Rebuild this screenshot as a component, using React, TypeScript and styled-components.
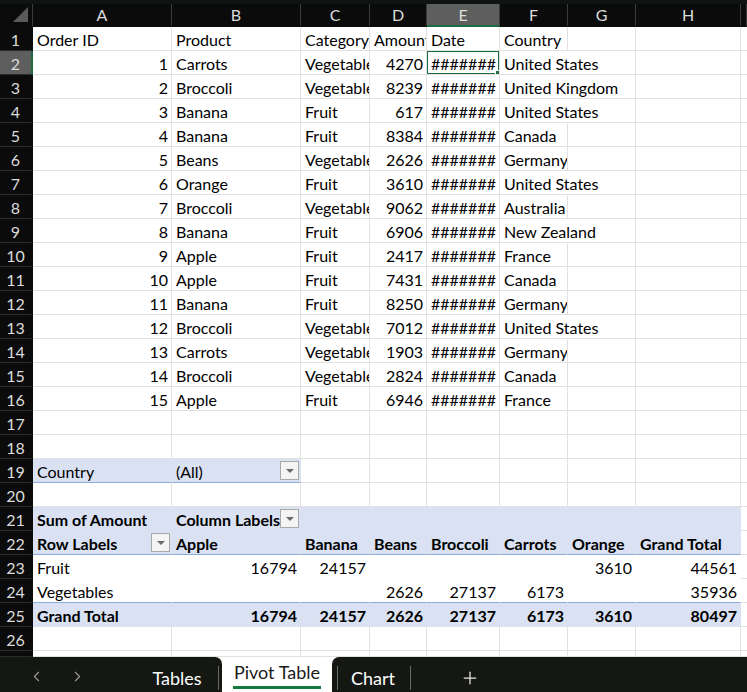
import styled, { createGlobalStyle, css } from "styled-components";
import { ChevronLeft, ChevronRight, Plus } from "lucide-react";

const GlobalStyle = createGlobalStyle`
  html, body {
    margin: 0;
    padding: 0;
    background: #ffffff;
  }
  body {
    font-family: Lato, "Liberation Sans", sans-serif;
    overflow: hidden;
  }
`;

const COLS = "33px 139px 129px 69px 57px 73px 68px 68px 105px 6px";
const BAND = "#d9e1f2";
const BLUE_LINE = "#8ea9db";
const GRID = "#e1e1e1";
const GREEN = "#1d6b40";

const Page = styled.div`
  width: 747px;
  height: 692px;
  display: flex;
  flex-direction: column;
  overflow: hidden;
  background: #ffffff;
`;

const TopStrip = styled.div`
  height: 4px;
  flex-shrink: 0;
  background: #0f1410;
`;

const Row = styled.div<{ $h?: number }>`
  display: grid;
  grid-template-columns: ${COLS};
  grid-template-rows: ${(p) => p.$h ?? 24}px;
  height: ${(p) => p.$h ?? 24}px;
  flex-shrink: 0;
  overflow: hidden;
`;

const ColHead = styled.div<{ $active?: boolean }>`
  position: relative;
  box-sizing: border-box;
  background: ${(p) => (p.$active ? "#5e5e5e" : "#0b0b0b")};
  color: #dcdcdc;
  font-size: 16px;
  display: flex;
  align-items: center;
  justify-content: center;
  border-right: 1px solid #3a3a3a;
  border-bottom: 2px solid ${(p) => (p.$active ? GREEN : "#0b0b0b")};
`;

const Corner = styled.div`
  position: absolute;
  right: 4px;
  bottom: 3px;
  width: 0;
  height: 0;
  border-left: 15px solid transparent;
  border-bottom: 15px solid #5a5a5a;
`;

const RowHead = styled.div<{ $active?: boolean }>`
  box-sizing: border-box;
  overflow: hidden;
  background: ${(p) => (p.$active ? "#5e5e5e" : "#0b0b0b")};
  color: #dcdcdc;
  font-size: 16px;
  padding-top: 1px;
  display: flex;
  align-items: center;
  justify-content: center;
  border-bottom: 1px solid #2c2c2c;
  border-right: 2px solid ${(p) => (p.$active ? GREEN : "#0b0b0b")};
`;

type Fill = "none" | "band" | "plain";

const Cell = styled.div<{
  $align?: "left" | "right";
  $bold?: boolean;
  $fill?: Fill;
  $spill?: boolean;
  $bottom?: "grid" | "blue" | "none";
}>`
  position: relative;
  box-sizing: border-box;
  height: 100%;
  padding: 2px 3px 0 4px;
  font-size: 16px;
  line-height: 22px;
  color: #000000;
  white-space: nowrap;
  overflow: ${(p) => (p.$spill ? "visible" : "hidden")};
  z-index: ${(p) => (p.$spill ? 2 : 1)};
  text-align: ${(p) => (p.$align === "right" ? "right" : "left")};
  font-weight: ${(p) => (p.$bold ? 700 : 400)};
  background: ${(p) => (p.$fill === "band" ? BAND : p.$spill ? "transparent" : "#ffffff")};
  ${(p) =>
    p.$fill === "band" || p.$fill === "plain"
      ? css`
          border-right: 1px solid ${p.$fill === "band" ? BAND : "#ffffff"};
        `
      : css`
          border-right: 1px solid ${p.$spill ? "transparent" : GRID};
        `}
  border-bottom: 1px solid
    ${(p) =>
      p.$bottom === "blue"
        ? BLUE_LINE
        : p.$bottom === "none"
        ? p.$fill === "band"
          ? BAND
          : "#ffffff"
        : GRID};
`;

const Selection = styled.div`
  position: absolute;
  left: -1px;
  top: -1px;
  right: -1px;
  bottom: -1px;
  border: 2px solid ${GREEN};
  pointer-events: none;
  z-index: 3;

  &::after {
    content: "";
    position: absolute;
    right: -5px;
    bottom: -5px;
    width: 6px;
    height: 6px;
    background: ${GREEN};
    border: 1px solid #ffffff;
  }
`;

const DropButton = styled.span`
  position: absolute;
  right: 1px;
  top: 2px;
  width: 19px;
  height: 19px;
  box-sizing: border-box;
  background: #f4f4f4;
  border: 1px solid #a9a9a9;
  display: flex;
  align-items: center;
  justify-content: center;
  z-index: 4;

  &::before {
    content: "";
    width: 0;
    height: 0;
    border-left: 4px solid transparent;
    border-right: 4px solid transparent;
    border-top: 4px solid #6b6b6b;
  }
`;

const TabBar = styled.div`
  height: 35px;
  flex-shrink: 0;
  display: flex;
  background: #ffffff;
`;

const TabSide = styled.div<{ $side: "left" | "right" }>`
  display: flex;
  align-items: center;
  background: #151713;
  color: #ffffff;
  font-size: 18px;
  ${(p) =>
    p.$side === "left"
      ? css`
          width: 222px;
          border-top-right-radius: 7px;
        `
      : css`
          flex: 1;
          border-top-left-radius: 7px;
        `}
`;

const Arrow = styled.span<{ $ml: number }>`
  display: flex;
  color: #9a9a9a;
  margin-left: ${(p) => p.$ml}px;
  padding-top: 4px;
`;

const Tab = styled.span<{ $w: number; $ml?: number }>`
  width: ${(p) => p.$w}px;
  margin-left: ${(p) => p.$ml ?? 0}px;
  text-align: center;
  padding-top: 6px;
`;

const Sep = styled.span<{ $ml?: number }>`
  width: 1px;
  height: 24px;
  background: #6a6a6a;
  margin-top: 6px;
  margin-left: ${(p) => p.$ml ?? 0}px;
`;

const ActiveTab = styled.div`
  width: 110px;
  display: flex;
  flex-direction: column;
  align-items: center;
  padding-top: 4px;
  font-size: 18px;
  color: #1a1a1a;

  span {
    padding: 0 1px 3px;
    border-bottom: 3px solid #167a40;
  }
`;

const AddSheet = styled.span`
  display: flex;
  color: #e8e8e8;
  margin-left: 49px;
  padding-top: 6px;
`;

type C = {
  t?: string;
  r?: boolean;
  b?: boolean;
  f?: Fill;
  spill?: boolean;
  bottom?: "grid" | "blue" | "none";
  sel?: boolean;
  drop?: boolean;
};

const data: [number, string, string, number, string][] = [
  [1, "Carrots", "Vegetable", 4270, "United States"],
  [2, "Broccoli", "Vegetable", 8239, "United Kingdom"],
  [3, "Banana", "Fruit", 617, "United States"],
  [4, "Banana", "Fruit", 8384, "Canada"],
  [5, "Beans", "Vegetable", 2626, "Germany"],
  [6, "Orange", "Fruit", 3610, "United States"],
  [7, "Broccoli", "Vegetable", 9062, "Australia"],
  [8, "Banana", "Fruit", 6906, "New Zealand"],
  [9, "Apple", "Fruit", 2417, "France"],
  [10, "Apple", "Fruit", 7431, "Canada"],
  [11, "Banana", "Fruit", 8250, "Germany"],
  [12, "Broccoli", "Vegetable", 7012, "United States"],
  [13, "Carrots", "Vegetable", 1903, "Germany"],
  [14, "Broccoli", "Vegetable", 2824, "Canada"],
  [15, "Apple", "Fruit", 6946, "France"],
];

const empty = (n: number): C[] => Array.from({ length: n }, () => ({}));

const rows: C[][] = [
  [
    { t: "Order ID" },
    { t: "Product" },
    { t: "Category" },
    { t: "Amount" },
    { t: "Date" },
    { t: "Country" },
    {},
    {},
    {},
  ],
  ...data.map(([id, prod, cat, amt, country], i): C[] => [
    { t: String(id), r: true },
    { t: prod },
    { t: cat },
    { t: String(amt), r: true },
    { t: "#######", sel: i === 0 },
    { t: country, spill: country.length > 9 },
    {},
    {},
    {},
  ]),
  empty(9),
  empty(9),
  [
    { t: "Country", f: "band", bottom: "blue" },
    { t: "(All)", f: "band", bottom: "blue", drop: true },
    {},
    {},
    {},
    {},
    {},
    {},
    {},
  ],
  empty(9),
  [
    { t: "Sum of Amount", b: true, f: "band", bottom: "none" },
    { t: "Column Labels", b: true, f: "band", bottom: "none", drop: true },
    ...Array.from({ length: 6 }, (): C => ({ f: "band", bottom: "none" })),
    {},
  ],
  [
    { t: "Row Labels", b: true, f: "band", bottom: "blue", drop: true },
    ...["Apple", "Banana", "Beans", "Broccoli", "Carrots", "Orange", "Grand Total"].map(
      (t): C => ({ t, b: true, f: "band", bottom: "blue" })
    ),
    {},
  ],
  [
    { t: "Fruit", f: "plain", bottom: "none" },
    ...["16794", "24157", "", "", "", "3610", "44561"].map(
      (t): C => ({ t, r: true, f: "plain", bottom: "none" })
    ),
    {},
  ],
  [
    { t: "Vegetables", f: "plain", bottom: "blue" },
    ...["", "", "2626", "27137", "6173", "", "35936"].map(
      (t): C => ({ t, r: true, f: "plain", bottom: "blue" })
    ),
    {},
  ],
  [
    { t: "Grand Total", b: true, f: "band", bottom: "none" },
    ...["16794", "24157", "2626", "27137", "6173", "3610", "80497"].map(
      (t): C => ({ t, r: true, b: true, f: "band", bottom: "none" })
    ),
    {},
  ],
  empty(9),
  empty(9),
];

const letters = ["A", "B", "C", "D", "E", "F", "G", "H", ""];

export default function App() {
  const last = rows.length - 1;
  return (
    <Page>
      <GlobalStyle />
      <TopStrip />
      <Row $h={23}>
        <ColHead>
          <Corner />
        </ColHead>
        {letters.map((l, i) => (
          <ColHead key={i} $active={l === "E"}>
            {l}
          </ColHead>
        ))}
      </Row>
      {rows.map((cells, ri) => (
        <Row key={ri} $h={ri === last ? 6 : 24}>
          <RowHead $active={ri === 1}>{ri === last ? "" : ri + 1}</RowHead>
          {cells.map((c, ci) => (
            <Cell
              key={ci}
              $align={c.r ? "right" : "left"}
              $bold={c.b}
              $fill={c.f}
              $spill={c.spill}
              $bottom={c.bottom}
            >
              {c.t}
              {c.sel && <Selection />}
              {c.drop && <DropButton />}
            </Cell>
          ))}
        </Row>
      ))}
      <TabBar>
        <TabSide $side="left">
          <Arrow $ml={28}>
            <ChevronLeft size={17} strokeWidth={1.5} />
          </Arrow>
          <Arrow $ml={24}>
            <ChevronRight size={17} strokeWidth={1.5} />
          </Arrow>
          <Tab $w={74} $ml={54}>
            Tables
          </Tab>
          <Sep $ml={4} />
        </TabSide>
        <ActiveTab>
          <span>Pivot Table</span>
        </ActiveTab>
        <TabSide $side="right">
          <Sep $ml={5} />
          <Tab $w={70}>Chart</Tab>
          <Sep $ml={2} />
          <AddSheet>
            <Plus size={20} strokeWidth={1.5} />
          </AddSheet>
        </TabSide>
      </TabBar>
    </Page>
  );
}
